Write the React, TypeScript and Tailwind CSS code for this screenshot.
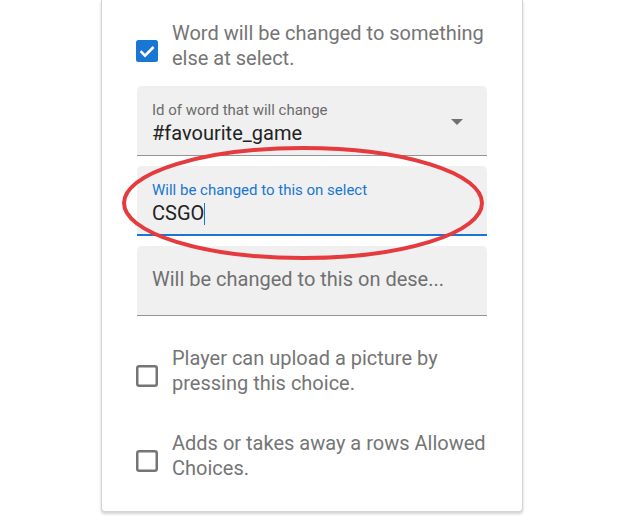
import React from 'react';

const font = { fontFamily: 'Roboto, "Noto Sans", sans-serif' };

function Check({ checked }: { checked?: boolean }) {
  if (checked) {
    return (
      <svg width="22" height="22" viewBox="0 0 22 22" className="shrink-0">
        <rect x="0" y="0" width="22" height="22" rx="2.5" fill="#1976d2" />
        <path d="M4.6 11.2 L9 15.6 L17.6 7" stroke="#fff" strokeWidth="2.6" fill="none" />
      </svg>
    );
  }
  return (
    <svg width="22" height="22" viewBox="0 0 22 22" className="shrink-0">
      <rect x="1.25" y="1.25" width="19.5" height="19.5" rx="2" fill="none" stroke="#757575" strokeWidth="2.5" />
    </svg>
  );
}

function CheckRow({ checked, text, className }: { checked?: boolean; text: string; className?: string }) {
  return (
    <div className={`flex items-start pl-[34px] pr-[30px] ${className ?? ''}`}>
      <div className="mt-[19.5px]">
        <Check checked={checked} />
      </div>
      <p className="ml-[14px] text-[20px] leading-[25px] text-[#757575]">{text}</p>
    </div>
  );
}

export default function App() {
  return (
    <div className="w-[629px] h-[532px] bg-white overflow-hidden" style={font}>
      <div className="relative ml-[101px] w-[422px] h-[512px] bg-white border-x border-b border-[#d4d4d4] rounded-b-[4px] shadow-[0_2px_3px_rgba(0,0,0,0.18)]">
        <CheckRow checked className="pt-[20.5px]" text="Word will be changed to something else at select." />

        <div className="mx-[35px] mt-[15.5px] flex flex-col gap-[10px]">
          {/* select */}
          <div className="relative h-[70px] bg-[#f0f0f0] rounded-t-[5px] border-b border-[#949494] pl-[15px]">
            <div className="pt-[15px] text-[15px] leading-[18px] text-[#6b6b6b]">Id of word that will change</div>
            <div className="mt-[2px] text-[20px] leading-[25px] text-[#222]">#favourite_game</div>
            <svg width="12" height="6" viewBox="0 0 12 6" className="absolute right-[24px] top-[33px]">
              <path d="M0 0 L12 0 L6 6 Z" fill="#707070" />
            </svg>
          </div>

          {/* focused input */}
          <div className="h-[70px] bg-[#f0f0f0] rounded-t-[5px] border-b-2 border-[#1976d2] pl-[15px]">
            <div className="pt-[15px] text-[15px] leading-[18px] text-[#1976d2]">Will be changed to this on select</div>
            <div className="mt-[2px] flex items-center text-[20px] leading-[25px] text-[#222]">
              CSGO
              <span className="inline-block w-px h-[22px] bg-[#1976d2]" />
            </div>
          </div>

          {/* empty input */}
          <div className="h-[70px] bg-[#f0f0f0] rounded-t-[5px] border-b border-[#949494] pl-[15px]">
            <div className="pt-[21px] text-[20px] leading-[25px] text-[#707070]">Will be changed to this on dese...</div>
          </div>
        </div>

        <CheckRow className="mt-[29.5px]" text="Player can upload a picture by pressing this choice." />
        <CheckRow className="mt-[35px]" text="Adds or takes away a rows Allowed Choices." />

        {/* red annotation ellipse */}
        <svg width="380" height="130" viewBox="0 0 380 130" className="absolute left-[11px] top-[138px] pointer-events-none">
          <ellipse cx="190" cy="65" rx="179" ry="55" fill="none" stroke="#e53b3e" strokeWidth="4" />
        </svg>
      </div>
    </div>
  );
}
